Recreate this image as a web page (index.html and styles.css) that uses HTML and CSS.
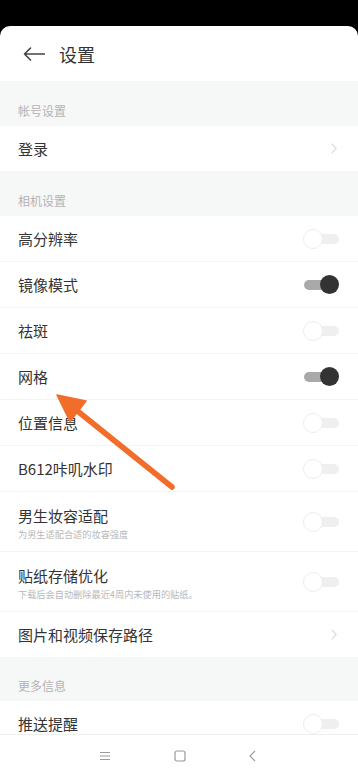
FILE: index.html
```html
<!DOCTYPE html>
<html lang="zh-CN">
<head>
<meta charset="utf-8">
<meta name="viewport" content="width=358">
<title>设置</title>
<link rel="stylesheet" href="styles.css">
</head>
<body>
<div class="app">
  <div class="status"></div>
  <div class="screen">
    <div class="header">
      <svg class="back" width="22" height="14" viewBox="0 0 22 14"><path d="M21.5 7H1.5M7.5 1L1.5 7L7.5 13" fill="none" stroke="#444" stroke-width="1.6" stroke-linecap="round" stroke-linejoin="round"/></svg>
      <span class="title">设置</span>
    </div>
    <div class="list">
      <div class="section">帐号设置</div>
      <div class="row row-short"><span class="label">登录</span><span class="chev"><svg width="6" height="11" viewBox="0 0 6 11"><path d="M0.7 0.7L5.2 5.5L0.7 10.3" fill="none" stroke="#dcdcdc" stroke-width="1.2"/></svg></span></div>
      <div class="section">相机设置</div>
      <div class="row"><span class="label">高分辨率</span><span class="toggle"><span class="track"></span><span class="knob"></span></span></div>
      <div class="row"><span class="label">镜像模式</span><span class="toggle on"><span class="track"></span><span class="knob"></span></span></div>
      <div class="row"><span class="label">祛斑</span><span class="toggle"><span class="track"></span><span class="knob"></span></span></div>
      <div class="row"><span class="label">网格</span><span class="toggle on"><span class="track"></span><span class="knob"></span></span></div>
      <div class="row"><span class="label">位置信息</span><span class="toggle"><span class="track"></span><span class="knob"></span></span></div>
      <div class="row"><span class="label">B612咔叽水印</span><span class="toggle"><span class="track"></span><span class="knob"></span></span></div>
      <div class="row row-tall"><div class="text"><span class="label">男生妆容适配</span><span class="sub">为男生适配合适的妆容强度</span></div><span class="toggle"><span class="track"></span><span class="knob"></span></span></div>
      <div class="row row-tall"><div class="text"><span class="label">贴纸存储优化</span><span class="sub">下载后会自动删除最近4周内未使用的贴纸。</span></div><span class="toggle"><span class="track"></span><span class="knob"></span></span></div>
      <div class="row row-short"><span class="label">图片和视频保存路径</span><span class="chev"><svg width="6" height="11" viewBox="0 0 6 11"><path d="M0.7 0.7L5.2 5.5L0.7 10.3" fill="none" stroke="#dcdcdc" stroke-width="1.2"/></svg></span></div>
      <div class="section section-short">更多信息</div>
      <div class="row"><span class="label">推送提醒</span><span class="toggle"><span class="track"></span><span class="knob"></span></span></div>
    </div>
    <div class="nav">
      <svg width="12" height="10" viewBox="0 0 12 10"><path d="M1 1.5H11M1 5H11M1 8.5H11" stroke="#9a9a9a" stroke-width="1"/></svg>
      <svg width="12" height="12" viewBox="0 0 12 12"><rect x="1" y="1" width="10" height="10" rx="2" fill="none" stroke="#9a9a9a" stroke-width="1.2"/></svg>
      <svg width="7" height="12" viewBox="0 0 7 12"><path d="M6 1L1 6L6 11" fill="none" stroke="#9a9a9a" stroke-width="1.1"/></svg>
    </div>
  </div>
  <svg class="pointer" width="358" height="777" viewBox="0 0 358 777">
    <path d="M172 487L75 409" stroke="#f26c2a" stroke-width="5.5" stroke-linecap="round"/>
    <polygon points="57,395 86,401 70,421.5" fill="#f26c2a" stroke="#f26c2a" stroke-width="1.5" stroke-linejoin="round"/>
  </svg>
</div>
</body>
</html>
```

FILE: styles.css
```css
* { box-sizing: border-box; }
html, body { margin: 0; padding: 0; }
body {
  font-family: "Noto Sans CJK SC", "Noto Sans", sans-serif;
  background: #000;
}
.app {
  position: relative;
  width: 358px;
  height: 777px;
  overflow: hidden;
  background: #000;
  display: flex;
  flex-direction: column;
}
.status { height: 26px; flex: none; }
.screen {
  flex: 1;
  background: #fff;
  border-radius: 10px 10px 0 0;
  display: flex;
  flex-direction: column;
  overflow: hidden;
}
.header {
  height: 55px;
  flex: none;
  display: flex;
  align-items: center;
  padding-left: 23px;
  gap: 14px;
}
.back { display: block; margin-top: 1px; }
.title {
  font-size: 18px;
  color: #333;
  line-height: 1;
}
.list { flex: 1; overflow: hidden; }
.section {
  height: 45px;
  background: #f6f7f7;
  padding: 0 18px 7px;
  display: flex;
  align-items: flex-end;
  font-size: 12px;
  color: #b4b4b4;
  line-height: 17px;
}
.section-short { height: 44px; }
.row {
  height: 46px;
  border-bottom: 1px solid #f4f4f4;
  display: flex;
  align-items: center;
  justify-content: space-between;
  padding: 0 19px 0 18px;
}
.row-short { height: 45px; border-bottom: none; }
.row-tall { height: 60px; }
.label {
  font-size: 15px;
  color: #333;
  line-height: 20px;
}
.text { display: flex; flex-direction: column; }
.row-tall .text { margin-top: 4px; }
.sub {
  font-size: 9.2px;
  color: #b8b8b8;
  line-height: 13px;
  margin-top: 2px;
}
.chev { display: flex; align-items: center; margin-right: 2px; }
.toggle {
  position: relative;
  width: 36px;
  height: 20px;
  flex: none;
}
.track {
  position: absolute;
  left: 1px;
  right: 0;
  top: 5px;
  height: 10px;
  border-radius: 5px;
  background: #efefef;
}
.knob {
  position: absolute;
  left: 0;
  top: 0;
  width: 20px;
  height: 20px;
  border-radius: 50%;
  background: #fff;
  border: 1px solid #ececec;
}
.toggle.on .track { background: #a9a9a9; right: 3px; }
.toggle.on .knob {
  left: auto;
  right: 0;
  top: 0.5px;
  width: 19px;
  height: 19px;
  background: #333;
  border: none;
}
.nav {
  height: 43px;
  flex: none;
  border-top: 1px solid #efefef;
  display: flex;
  align-items: center;
  justify-content: center;
  gap: 63px;
  padding: 0 4px 1px 0;
}
.nav svg { display: block; }
.pointer {
  position: absolute;
  left: 0;
  top: 0;
  pointer-events: none;
}
```
